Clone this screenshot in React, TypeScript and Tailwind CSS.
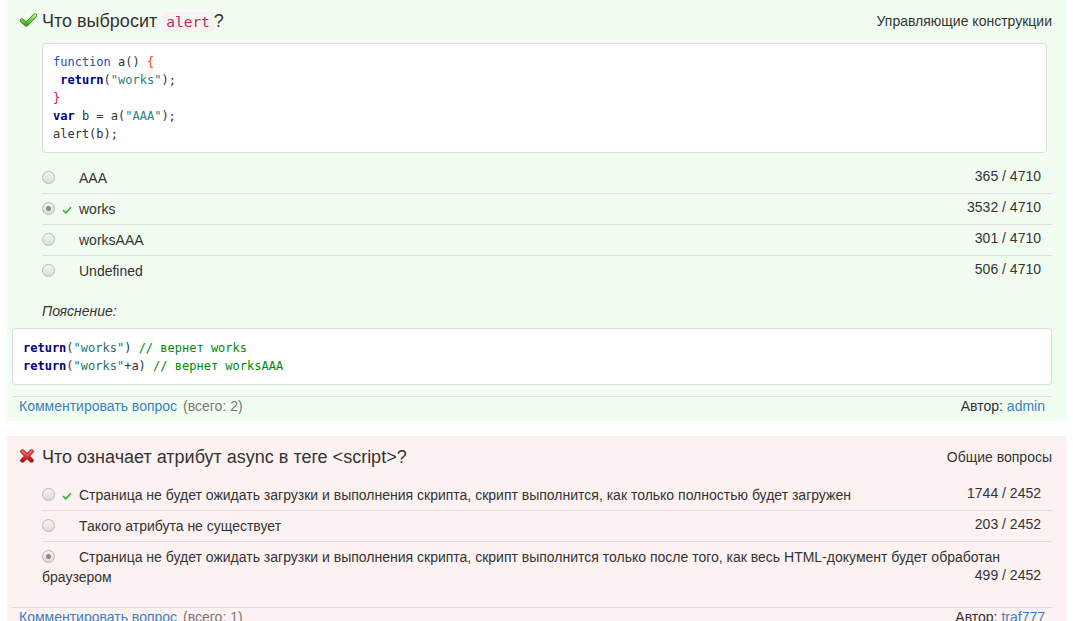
import React from "react";

type Answer = {
  text: string;
  count: string;
  picked?: boolean;
  correct?: boolean;
};

// Radio in its disabled look, like the browser draws it
const Radio = ({ picked }: { picked?: boolean }) => (
  <span className="inline-block align-[-1px] w-[13px] h-[13px] mr-[7px] rounded-full border border-[#b5b5b5] bg-gradient-to-b from-[#f4f4f4] to-[#dcdcdc] relative">
    {picked && (
      <span className="absolute left-[3px] top-[3px] w-[5px] h-[5px] rounded-full bg-[#8a8a8a]" />
    )}
  </span>
);

const SmallCheck = () => (
  <svg width="10" height="8" viewBox="0 0 10 8" className="inline-block">
    <path d="M1 4.2 L3.8 6.8 L9 1.2" fill="none" stroke="#2fb82f" strokeWidth="1.6" />
  </svg>
);

const AnswerRow = ({ a }: { a: Answer }) => (
  <div className="py-[5px] pr-[11px] leading-5">
    <Radio picked={a.picked} />
    <span className="inline-block w-[17px]">{a.correct && <SmallCheck />}</span>
    {a.text}
    <span className="float-right -mt-[2px]">{a.count}</span>
  </div>
);

const OkIcon = () => (
  <svg width="17" height="14" viewBox="0 0 17 14" className="mt-[-3px]">
    <defs>
      <linearGradient id="okg" x1="0" y1="0" x2="0" y2="1">
        <stop offset="0" stopColor="#b0f088" />
        <stop offset="1" stopColor="#44a722" />
      </linearGradient>
    </defs>
    <path d="M2 7.5 L6.2 11.5 L15 2.5" fill="none" stroke="#2f8a18" strokeWidth="4.4" strokeLinecap="round" strokeLinejoin="round" />
    <path d="M2 7.5 L6.2 11.5 L15 2.5" fill="none" stroke="url(#okg)" strokeWidth="2.8" strokeLinecap="round" strokeLinejoin="round" />
  </svg>
);

const FailIcon = () => (
  <svg width="14" height="14" viewBox="0 0 14 14" className="mt-[-3px]">
    <defs>
      <linearGradient id="failg" x1="0" y1="0" x2="0" y2="1">
        <stop offset="0" stopColor="#ff6b6b" />
        <stop offset="1" stopColor="#c80f14" />
      </linearGradient>
    </defs>
    <path d="M2.5 2.5 L11.5 11.5 M11.5 2.5 L2.5 11.5" stroke="#9a0a0e" strokeWidth="4.4" strokeLinecap="round" />
    <path d="M2.5 2.5 L11.5 11.5 M11.5 2.5 L2.5 11.5" stroke="url(#failg)" strokeWidth="2.8" strokeLinecap="round" />
  </svg>
);

const Footer = ({ total, author }: { total: number; author: string }) => (
  <div className="border-t border-[#dedede] px-[7px] leading-[19px] pb-[5px] flex justify-between">
    <div>
      <span className="text-[#3c7fc0]">Комментировать вопрос</span>
      <span className="text-[#777] ml-[6px]">(всего: {total})</span>
    </div>
    <div>
      Автор: <span className="text-[#3c7fc0]">{author}</span>
    </div>
  </div>
);

const first: Answer[] = [
  { text: "AAA", count: "365 / 4710" },
  { text: "works", count: "3532 / 4710", picked: true, correct: true },
  { text: "worksAAA", count: "301 / 4710" },
  { text: "Undefined", count: "506 / 4710" },
];

const second: Answer[] = [
  {
    text: "Страница не будет ожидать загрузки и выполнения скрипта, скрипт выполнится, как только полностью будет загружен",
    count: "1744 / 2452",
    correct: true,
  },
  { text: "Такого атрибута не существует", count: "203 / 2452" },
  {
    text: "Страница не будет ожидать загрузки и выполнения скрипта, скрипт выполнится только после того, как весь HTML-документ будет обработан браузером",
    count: "499 / 2452",
    picked: true,
  },
];

const mono = "font-['DejaVu_Sans_Mono','Liberation_Mono',monospace]";

export default function App() {
  return (
    <div className="min-h-screen bg-white pl-[7px] pr-[6px] text-[14px] text-[#333] font-['Liberation_Sans',Arial,sans-serif]">
      {/* Question 1: answered right */}
      <div className="bg-[#f2fdf2] pl-[5px] pr-[15px] pt-[10px]">
        <div className="flex justify-between items-center pl-[8px]">
          <div className="flex items-center gap-[5px] text-[18px] leading-[22px]">
            <OkIcon />
            <span>
              Что выбросит{" "}
              <code className={`${mono} text-[14.5px] text-[#c7254e] bg-[#f9f2f4] px-[4px] py-[2px] rounded`}>
                alert
              </code>
              ?
            </span>
          </div>
          <div>Управляющие конструкции</div>
        </div>

        <div className="ml-[30px]">
          <pre className={`${mono} mt-[10px] mr-[5px] bg-white border border-[#dcdcdc] rounded px-[10px] pt-[9px] pb-[9px] text-[12px] leading-[18px] text-[#333]`}>
            <span className="text-[#2747c9]">function</span> a() <span className="text-[#f2401f]">{"{"}</span>
            {"\n "}
            <span className="font-bold text-[#000080]">return</span>(<span className="text-[#2b7f86]">"works"</span>);
            {"\n"}
            <span className="text-[#d1104a]">{"}"}</span>
            {"\n"}
            <span className="font-bold text-[#000080]">var</span> b = a(<span className="text-[#2b7f86]">"AAA"</span>);
            {"\n"}alert(b);
          </pre>

          <div className="mt-[10px] divide-y divide-[#dedede]">
            {first.map((a) => (
              <AnswerRow key={a.text} a={a} />
            ))}
          </div>

          <div className="mt-[15px] italic leading-5">Пояснение:</div>
        </div>

        <pre className={`${mono} mt-[7px] bg-white border border-[#dcdcdc] rounded px-[10px] pt-[10px] pb-[9px] text-[12px] leading-[18px] text-[#333]`}>
          <span className="font-bold text-[#000080]">return</span>(<span className="text-[#2b6f6f]">"works"</span>){" "}
          <span className="text-[#00860b]">// вернет works</span>
          {"\n"}
          <span className="font-bold text-[#000080]">return</span>(<span className="text-[#2b6f6f]">"works"</span>+a){" "}
          <span className="text-[#00860b]">// вернет worksAAA</span>
        </pre>

        <div className="mt-[11px]">
          <Footer total={2} author="admin" />
        </div>
      </div>

      {/* Question 2: answered wrong */}
      <div className="mt-[15px] bg-[#fdf2f2] pl-[5px] pr-[15px] pt-[10px]">
        <div className="flex justify-between items-center pl-[8px]">
          <div className="flex items-center gap-[8px] text-[18px] leading-[22px]">
            <FailIcon />
            <span>Что означает атрибут async в теге &lt;script&gt;?</span>
          </div>
          <div>Общие вопросы</div>
        </div>

        <div className="ml-[30px] mt-[12px] divide-y divide-[#dedede]">
          {second.map((a) => (
            <AnswerRow key={a.count} a={a} />
          ))}
        </div>

        <div className="mt-[15px]">
          <Footer total={1} author="traf777" />
        </div>
      </div>
    </div>
  );
}
